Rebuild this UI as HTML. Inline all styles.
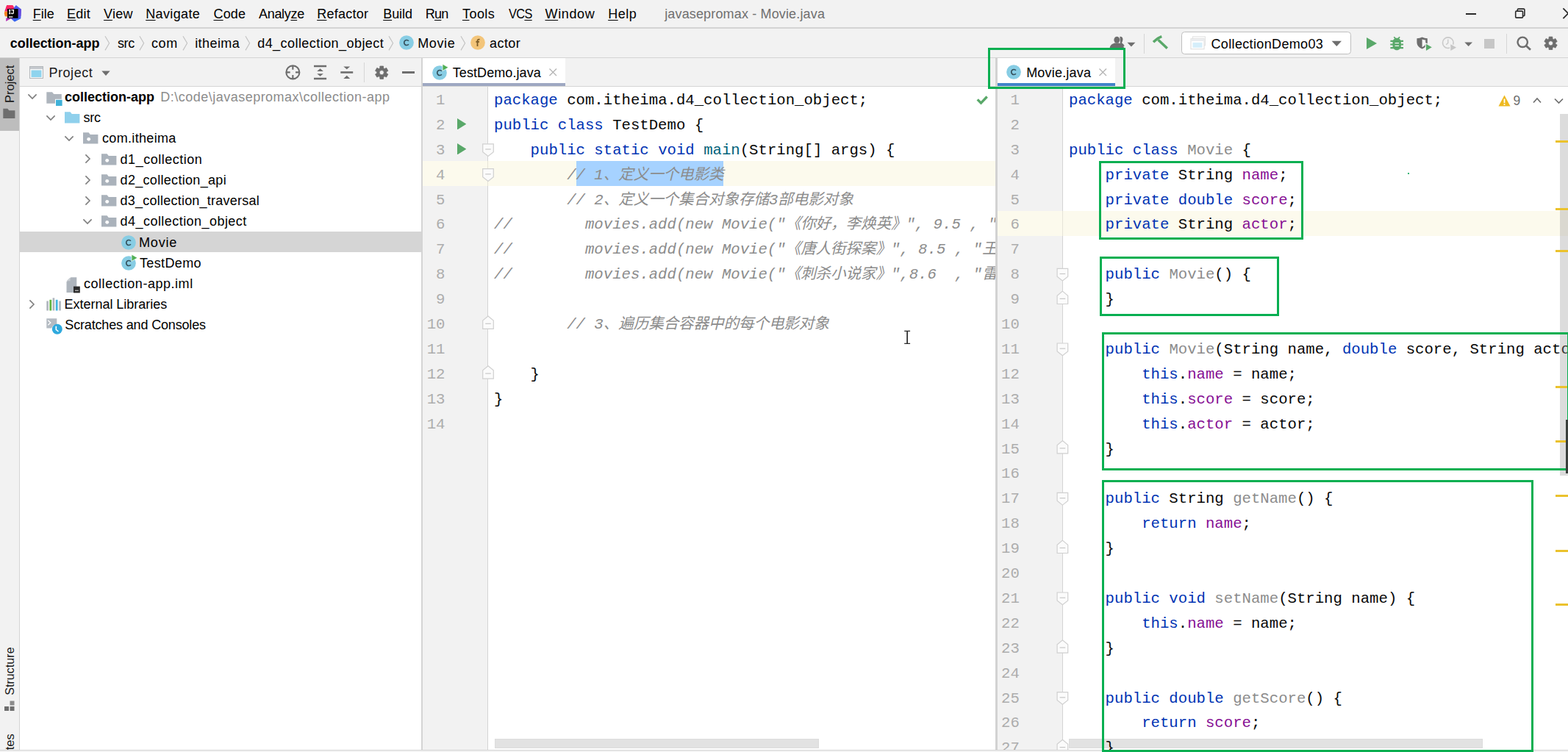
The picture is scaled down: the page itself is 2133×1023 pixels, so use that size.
<!DOCTYPE html><html><head><meta charset="utf-8"><title>IDE</title><style>
html,body{margin:0;padding:0}
body{width:2133px;height:1023px;overflow:hidden;background:#f2f2f2;position:relative;font-family:"Liberation Sans", sans-serif;}
#r{position:absolute;left:0;top:0;width:2133px;height:1023px;overflow:hidden}
#r div,#r svg{position:absolute}
.t{white-space:pre;font-family:"Liberation Sans", sans-serif}
.m{font-family:"Liberation Mono", monospace}
.ln{white-space:pre;font-family:"Liberation Mono", "Noto Sans CJK SC", monospace;font-size:20.67px;line-height:33.9px;height:33.9px;color:#080808}
.z{letter-spacing:-0.19px}
.k{color:#0033b3}.f{color:#871094}.g{color:#8c8c8c}.c{color:#8c8c8c;font-style:italic}.fn{color:#00627a}
.n{font-family:"Liberation Mono", monospace;font-size:20.67px;line-height:33.9px;color:#adadad;text-align:right;width:40px}
u{text-decoration:underline;text-underline-offset:1.500px;text-decoration-thickness:1.200px}
</style></head><body><div id="r"><div style="left:0px;top:0px;width:2133px;height:38px;background:#f2f2f2;"></div><div style="left:0px;top:37.3px;width:2133px;height:1.4px;background:#d4d4d4;"></div><svg style="left:4px;top:4px" width="28" height="28" viewBox="4 4 28 28">
<path d="M9.300 6.900L17.300 7.300L19.600 11L17 16L6.200 15.400Z" fill="#f4266e"/><path d="M9.300 6.900L17.300 7.300L19.600 11L8 11Z" fill="#fb2860"/>
<path d="M6.300 15.600L10.500 15.800L10.500 22.800L6.800 22.200L5.800 18.500Z" fill="#fc801d"/>
<path d="M21.800 6.900L28.800 12.600L28.300 25L19.900 29.600L15.400 25.600L19 10.500Z" fill="#4a5cee"/><path d="M24.600 12L28.800 12.600L28.400 22L24.600 22Z" fill="#6a4ae0"/><path d="M15.400 25.600L24.600 24.800L28.300 25L19.900 29.600Z" fill="#3668f3"/>
<path d="M8.400 24.300L8.100 28.900L15.800 24.800Z" fill="#b52fb5"/>
<path d="M10 24.600L14 24.600L18 26.600L20 27.500L17 24.600Z" fill="#7d3fd6"/>
<rect x="10" y="12.100" width="14.600" height="12.700" fill="#000"/>
<path d="M12 13.600h2.400M13.200 13.600v5M12 18.600h2.400M15.400 13.600h3.700M18.300 13.600v3.600a1.400 1.400 0 0 1-2.800 .2" stroke="#fff" stroke-width="1.300" fill="none"/>
<path d="M11.900 23h5.500" stroke="#fff" stroke-width="1.300"/></svg><div class="t" style="letter-spacing:-0.004px;left:44.7px;top:10.46px;font-size:18px;line-height:18px;color:#000;"><u>F</u>ile</div><div class="t" style="letter-spacing:0.305px;left:90.9px;top:10.46px;font-size:18px;line-height:18px;color:#000;"><u>E</u>dit</div><div class="t" style="letter-spacing:0.228px;left:141px;top:10.46px;font-size:18px;line-height:18px;color:#000;"><u>V</u>iew</div><div class="t" style="letter-spacing:0.367px;left:198.2px;top:10.46px;font-size:18px;line-height:18px;color:#000;"><u>N</u>avigate</div><div class="t" style="letter-spacing:0.129px;left:290.5px;top:10.46px;font-size:18px;line-height:18px;color:#000;"><u>C</u>ode</div><div class="t" style="letter-spacing:-0.315px;left:352px;top:10.46px;font-size:18px;line-height:18px;color:#000;">Analy<u>z</u>e</div><div class="t" style="letter-spacing:0.236px;left:431.2px;top:10.46px;font-size:18px;line-height:18px;color:#000;"><u>R</u>efactor</div><div class="t" style="letter-spacing:-0.055px;left:521.2px;top:10.46px;font-size:18px;line-height:18px;color:#000;"><u>B</u>uild</div><div class="t" style="letter-spacing:-0.693px;left:578.7px;top:10.46px;font-size:18px;line-height:18px;color:#000;">R<u>u</u>n</div><div class="t" style="letter-spacing:0.438px;left:629px;top:10.46px;font-size:18px;line-height:18px;color:#000;"><u>T</u>ools</div><div class="t" style="letter-spacing:-0.700px;transform-origin:0 50%;transform:scaleX(0.9070);left:692px;top:10.46px;font-size:18px;line-height:18px;color:#000;">VC<u>S</u></div><div class="t" style="letter-spacing:0.631px;left:741.5px;top:10.46px;font-size:18px;line-height:18px;color:#000;"><u>W</u>indow</div><div class="t" style="letter-spacing:0.505px;left:827.2px;top:10.46px;font-size:18px;line-height:18px;color:#000;"><u>H</u>elp</div><div class="t" style="letter-spacing:0.151px;left:904.2px;top:10.46px;font-size:18px;line-height:18px;color:#707070;">javasepromax - Movie.java</div><div style="left:1994px;top:18px;width:14.2px;height:1.8px;background:#2a2a2a;"></div><svg style="left:2058px;top:9px" width="20" height="19" viewBox="2058 9 20 19"><rect x="2064.300" y="12.100" width="9.600" height="9.500" rx="1.200" fill="none" stroke="#2a2a2a" stroke-width="1.600"/><rect x="2061.700" y="15.100" width="9.800" height="9" rx="1.200" fill="#f2f2f2" stroke="#2a2a2a" stroke-width="1.600"/></svg><svg style="left:2122px;top:8px" width="11" height="21" viewBox="2122 8 11 21"><path d="M2126.400 11.300L2140 25M2126.400 25.100L2140 11.400" fill="none" stroke="#2a2a2a" stroke-width="1.700"/></svg><div style="left:0px;top:39px;width:2133px;height:39px;background:#f2f2f2;"></div><div style="left:0px;top:78px;width:2133px;height:1px;background:#d4d4d4;"></div><div class="t" style="letter-spacing:-0.016px;left:13.7px;top:50.06px;font-size:18px;line-height:18px;color:#000;font-weight:700;">collection-app</div><div class="t" style="letter-spacing:-0.400px;left:160px;top:50.06px;font-size:18px;line-height:18px;color:#000;">src</div><div class="t" style="letter-spacing:0.594px;left:206px;top:50.06px;font-size:18px;line-height:18px;color:#000;">com</div><div class="t" style="letter-spacing:0.426px;left:265.2px;top:50.06px;font-size:18px;line-height:18px;color:#000;">itheima</div><div class="t" style="letter-spacing:0.445px;left:350.2px;top:50.06px;font-size:18px;line-height:18px;color:#000;">d4_collection_object</div><div class="t" style="letter-spacing:0.619px;left:568.2px;top:50.06px;font-size:18px;line-height:18px;color:#000;">Movie</div><div class="t" style="letter-spacing:0.438px;left:666px;top:50.06px;font-size:18px;line-height:18px;color:#000;">actor</div><svg style="left:140.7px;top:47px;" width="10" height="24" viewBox="0 0 10 24"><path d="M2 2.200L7.600 11.800L2 21.400" fill="none" stroke="#c2c2c2" stroke-width="1.150"/></svg><svg style="left:188.2px;top:47px;" width="10" height="24" viewBox="0 0 10 24"><path d="M2 2.200L7.600 11.800L2 21.400" fill="none" stroke="#c2c2c2" stroke-width="1.150"/></svg><svg style="left:246.7px;top:47px;" width="10" height="24" viewBox="0 0 10 24"><path d="M2 2.200L7.600 11.800L2 21.400" fill="none" stroke="#c2c2c2" stroke-width="1.150"/></svg><svg style="left:331.7px;top:47px;" width="10" height="24" viewBox="0 0 10 24"><path d="M2 2.200L7.600 11.800L2 21.400" fill="none" stroke="#c2c2c2" stroke-width="1.150"/></svg><svg style="left:527.2px;top:47px;" width="10" height="24" viewBox="0 0 10 24"><path d="M2 2.200L7.600 11.800L2 21.400" fill="none" stroke="#c2c2c2" stroke-width="1.150"/></svg><svg style="left:624.7px;top:47px;" width="10" height="24" viewBox="0 0 10 24"><path d="M2 2.200L7.600 11.800L2 21.400" fill="none" stroke="#c2c2c2" stroke-width="1.150"/></svg><svg style="left:540.7px;top:46.3px;" width="24" height="24" viewBox="0 0 24 24"><circle cx="12" cy="12" r="9.85" fill="#87cde4"/><path d="M14.9 14.3a3.500 3.500 0 1 1 0-4.600" fill="none" stroke="#35505c" stroke-width="1.700"/></svg><svg style="left:638px;top:46.3px;" width="24" height="24" viewBox="0 0 24 24"><circle cx="12" cy="12" r="9.85" fill="#f3c57a"/><path d="M14.6 7.6h-1.2a1.9 1.9 0 0 0-1.9 1.9V17M9.4 10.9h4.6" fill="none" stroke="#7a5a26" stroke-width="1.8"/></svg><svg style="left:1506px;top:46px" width="42" height="24" viewBox="1506 46 42 24"><path d="M1523.400 49.800c2.600-.500 4.300 1.600 4 4.300c-.2 2-1 3.200-1.400 4.200c1.200 1.600 3.200 1.800 3.600 4.500l-5.500 .2Z" fill="#6e6e6e"/><ellipse cx="1519.300" cy="54.300" rx="3.900" ry="4.500" fill="#6e6e6e"/><path d="M1509.600 66c.2-5 3.600-6.300 6.800-7.400h5.800c3.200 1.100 6.600 2.400 6.800 7.400Z" fill="#6e6e6e"/><path d="M1533.400 57.800h11l-5.500 5.700Z" fill="#6e6e6e"/></svg><div style="left:1556px;top:45.5px;width:1px;height:27px;background:#d6d6d6;"></div><svg style="left:1565px;top:46px" width="27" height="24" viewBox="1565 46 27 24"><path d="M1569 57.300C1572.500 54 1576 51 1580.300 49.600" fill="none" stroke="#59a869" stroke-width="3.600"/><path d="M1575.600 54.300L1587.800 65.700" fill="none" stroke="#59a869" stroke-width="3.400"/></svg><div style="left:1607px;top:43.400px;width:228.600px;height:28.200px;background:#fff;border:1.300px solid #bfbfbf;border-radius:4.500px"></div><svg style="left:1619px;top:49px;" width="22" height="19" viewBox="0 0 22 19"><rect x="3.500" y="0.8" width="17" height="12" fill="#fafafa" stroke="#e3e3e3" stroke-width="1"/><rect x="1" y="3.800" width="18" height="14" fill="#fff" stroke="#dcdcdc" stroke-width="1"/><rect x="1.500" y="4.300" width="17" height="2.600" fill="#e9ebee"/><rect x="3.500" y="8.800" width="13" height="7" fill="#d5eefa"/></svg><div class="t" style="letter-spacing:0.350px;left:1647.5px;top:50.76px;font-size:18px;line-height:18px;color:#000;">CollectionDemo03</div><svg style="left:1811px;top:55px;" width="15" height="9" viewBox="0 0 15 9"><path d="M0.600 0.800H14L7.300 8Z" fill="#6e6e6e"/></svg><svg style="left:1858.5px;top:51px;" width="14" height="16" viewBox="0 0 14 16"><path d="M0 0L14 8.0L0 16Z" fill="#59a869"/></svg><svg style="left:1888px;top:47px" width="24" height="24" viewBox="1888 47 24 24"><path d="M1896.300 50.300l2.300 2.600M1904.100 50.300l-2.300 2.600" stroke="#59a869" stroke-width="1.700" fill="none"/><path d="M1891.400 55.900h4.500M1904.500 55.900h4.500M1891.300 60.500h4M1905 60.500h4M1891.400 65.100h4.500M1904.500 65.100h4.500" stroke="#59a869" stroke-width="2.100" fill="none"/><path d="M1900.200 51.700c3.500 0 5.700 2.600 5.700 6v4.500c0 3.400-2.400 6-5.700 6s-5.700-2.600-5.700-6v-4.500c0-3.400 2.200-6 5.700-6Z" fill="#59a869"/><path d="M1897.500 58.600h5.500M1897.500 62.400h5.500" stroke="#f2f2f2" stroke-width="1.300"/></svg><svg style="left:1925px;top:47px" width="26" height="25" viewBox="1925 47 26 25"><path d="M1927.400 52.300c2.600-.300 5-1 7.200-1.900c2.200 .9 4.600 1.600 7.200 1.900v5.200c0 4.300-3 7.300-7.200 9c-4.200-1.700-7.200-4.700-7.200-9Z" fill="#6e6e6e"/><path d="M1934.600 53.400c1.600 .5 3 1 4.600 1.200v4c0 2.400-1.500 4.300-4.600 5.700Z" fill="#f7f7f7"/><path d="M1939.300 58.700L1948.900 64.300L1939.300 69.900Z" fill="#59a869" stroke="#f2f2f2" stroke-width="1.200"/></svg><svg style="left:1959px;top:47px" width="26" height="25" viewBox="1959 47 26 25"><circle cx="1969.800" cy="58.200" r="7.300" fill="none" stroke="#c9c9c9" stroke-width="1.600"/><path d="M1969.800 53.500v5l-2.600 2.200" fill="none" stroke="#c9c9c9" stroke-width="1.400"/><path d="M1972.700 59.200L1982.500 64.600L1972.700 70Z" fill="#c6c6c6" stroke="#f2f2f2" stroke-width="1.200"/></svg><svg style="left:1991px;top:56px" width="14" height="9" viewBox="1991 56 14 9"><path d="M1992.300 57.600h10.700l-5.350 5.500Z" fill="#6e6e6e"/></svg><div style="left:2019px;top:52.5px;width:14px;height:13.5px;background:#c6c6c6;"></div><div style="left:2049px;top:45.5px;width:1px;height:27px;background:#d6d6d6;"></div><svg style="left:2061px;top:47px" width="24" height="24" viewBox="2061 47 24 24"><circle cx="2071.200" cy="57.300" r="6.700" fill="none" stroke="#6e6e6e" stroke-width="2.400"/><path d="M2075.800 62L2082 67.800" stroke="#6e6e6e" stroke-width="2.800"/></svg><svg style="left:2098px;top:47px" width="22" height="22" viewBox="2098 47 22 22"><path d="M2111.93 52.77L2111.83 50.11L2107.17 50.11L2107.07 52.77L2105.50 53.68L2103.14 52.44L2100.81 56.47L2103.06 57.90L2103.06 59.70L2100.81 61.13L2103.14 65.16L2105.50 63.92L2107.07 64.83L2107.17 67.49L2111.83 67.49L2111.93 64.83L2113.50 63.92L2115.86 65.16L2118.19 61.13L2115.94 59.70L2115.94 57.90L2118.19 56.47L2115.86 52.44L2113.50 53.68ZM2106.40 58.80a3.1 3.1 0 1 0 6.2 0a3.1 3.1 0 1 0 -6.2 0Z" fill="#6e6e6e" fill-rule="evenodd" stroke="#6e6e6e" stroke-width="0.8" stroke-linejoin="round"/></svg><div style="left:0px;top:79px;width:26px;height:941px;background:#f2f2f2;"></div><div style="left:0px;top:79px;width:26px;height:99px;background:#bdbdbd;"></div><div style="left:26px;top:79px;width:1px;height:941px;background:#d4d4d4;"></div><div class="t" style="left:0;top:178px;width:99px;height:26px;transform-origin:0 0;transform:rotate(-90deg);font-size:16.500px;line-height:26px;color:#1a1a1a"><span style="position:absolute;left:38px;top:0">Project</span></div><svg style="left:4px;top:146px;" width="18" height="16" viewBox="0 0 18 16"><path d="M0.300 1.700h6l2 2.500h8.100v10.700H0.300Z" fill="#6e6e6e"/></svg><div class="t" style="left:0;top:1023px;width:200px;height:26px;transform-origin:0 0;transform:rotate(-90deg);font-size:16.500px;line-height:26px;color:#1a1a1a"><span style="position:absolute;left:77.300px;top:0;font-size:16.100px">Structure</span><span style="position:absolute;left:-43.200px;top:0">Favorites</span></div><svg style="left:5px;top:953.3px;" width="16" height="16" viewBox="0 0 16 16"><rect x="8.500" y="0.500" width="6" height="6" fill="#8a8a8a"/><rect x="1" y="8" width="6" height="6" fill="#6e6e6e"/><rect x="8.500" y="8" width="6" height="6" fill="#6e6e6e"/></svg><div style="left:27px;top:79px;width:546px;height:38px;background:#f2f2f2;"></div><div style="left:27px;top:117px;width:546px;height:1px;background:#d4d4d4;"></div><div style="left:27px;top:118px;width:546px;height:902px;background:#fff;"></div><div style="left:573px;top:79px;width:1.5px;height:941px;background:#d4d4d4;"></div><svg style="left:40.3px;top:90px;" width="19" height="17" viewBox="0 0 19 17"><rect x="0.500" y="0.500" width="18" height="16" fill="#f7f7f7" stroke="#b4b8bc" stroke-width="1"/><rect x="1" y="1" width="17" height="3" fill="#c5c9ce"/><rect x="2.500" y="5.500" width="14" height="9.500" fill="#8fd4ee"/></svg><div class="t" style="letter-spacing:0.534px;left:66.5px;top:90.16px;font-size:18px;line-height:18px;color:#1a1a1a;">Project</div><svg style="left:138px;top:96px;" width="12" height="8" viewBox="0 0 12 8"><path d="M0.300 0.500H11.700L6 7Z" fill="#6e6e6e"/></svg><svg style="left:386px;top:86px" width="25" height="25" viewBox="386 86 25 25"><circle cx="398.35" cy="98.4" r="9" fill="none" stroke="#6e6e6e" stroke-width="2.1"/><path d="M398.35 89v5.700M398.35 102.100v5.700M389 98.4h5.700M402 98.4h5.700" stroke="#6e6e6e" stroke-width="2.1"/></svg><svg style="left:425px;top:87px" width="22" height="23" viewBox="425 87 22 23"><path d="M427 90.050h17.100M427 106.950h17.100" stroke="#6e6e6e" stroke-width="2.600"/><path d="M431.200 96.900L435.550 93.300L439.900 96.900ZM431.200 100.200L435.550 103.700L439.900 100.200Z" fill="#6e6e6e"/></svg><svg style="left:461px;top:87px" width="22" height="23" viewBox="461 87 22 23"><path d="M463.300 98.450h16.900" stroke="#6e6e6e" stroke-width="2.600"/><path d="M467.300 90.400L471.750 94.200L476.200 90.400ZM467.300 106.900L471.750 102.800L476.200 106.900Z" fill="#6e6e6e"/></svg><div style="left:494.5px;top:85px;width:1px;height:27px;background:#d6d6d6;"></div><svg style="left:508px;top:87px" width="22" height="22" viewBox="508 87 22 22"><path d="M521.63 92.67L521.53 90.01L516.87 90.01L516.77 92.67L515.20 93.58L512.84 92.34L510.51 96.37L512.76 97.80L512.76 99.60L510.51 101.03L512.84 105.06L515.20 103.82L516.77 104.73L516.87 107.39L521.53 107.39L521.63 104.73L523.20 103.82L525.56 105.06L527.89 101.03L525.64 99.60L525.64 97.80L527.89 96.37L525.56 92.34L523.20 93.58ZM516.10 98.70a3.1 3.1 0 1 0 6.2 0a3.1 3.1 0 1 0 -6.2 0Z" fill="#6e6e6e" fill-rule="evenodd" stroke="#6e6e6e" stroke-width="0.8" stroke-linejoin="round"/></svg><div style="left:547px;top:97.1px;width:17px;height:2.6px;background:#6e6e6e;"></div><div style="left:27px;top:315.3px;width:546px;height:28.2px;background:#d5d5d5;"></div><svg style="left:35.6px;top:123.4px;" width="16" height="16" viewBox="0 0 16 16"><path d="M2.4000000000000004 5.4L8 11.0L13.6 5.4" fill="none" stroke="#7f7f7f" stroke-width="1.6"/></svg><svg style="left:62.5px;top:124.5px;" width="22" height="19" viewBox="0 0 22 19"><path d="M0.300 0.300h7.700l2.200 2.700H20.800V15.800H0.300Z" fill="#aeb5bd"/><rect x="12" y="9.800" width="10" height="9.200" fill="#fff"/><rect x="13" y="10.800" width="8.600" height="8.200" fill="#3fb1d8"/></svg><div class="t" style="letter-spacing:-0.001px;left:88px;top:123.06px;font-size:18px;line-height:18px;color:#000;font-weight:700;">collection-app</div><div class="t" style="letter-spacing:0.491px;left:218.2px;top:123.06px;font-size:18px;line-height:18px;color:#8c8c8c;">D:\code\javasepromax\collection-app</div><svg style="left:60.5px;top:151.61px;" width="16" height="16" viewBox="0 0 16 16"><path d="M2.4000000000000004 5.4L8 11.0L13.6 5.4" fill="none" stroke="#7f7f7f" stroke-width="1.6"/></svg><svg style="left:87.5px;top:152px;" width="21" height="16" viewBox="0 0 21 16"><path d="M0 0.3h7.6l2.2 2.7H20.4V15.6H0Z" fill="#8fd0ec"/></svg><div class="t" style="letter-spacing:-0.240px;left:113.6px;top:151.27px;font-size:18px;line-height:18px;color:#000;">src</div><svg style="left:86px;top:179.82000000000002px;" width="16" height="16" viewBox="0 0 16 16"><path d="M2.4000000000000004 5.4L8 11.0L13.6 5.4" fill="none" stroke="#7f7f7f" stroke-width="1.6"/></svg><svg style="left:113.3px;top:180.4px;" width="21" height="16" viewBox="0 0 21 16"><path d="M0 0.3h7.6l2.2 2.7H20.4V15.6H0Z" fill="#aab2bb"/><circle cx="7.7" cy="9.3" r="2.4" fill="#fff"/></svg><div class="t" style="letter-spacing:0.330px;left:139px;top:179.48px;font-size:18px;line-height:18px;color:#000;">com.itheima</div><svg style="left:111.3px;top:208.43px;" width="16" height="16" viewBox="0 0 16 16"><path d="M5.4 2.4000000000000004L11.0 8L5.4 13.6" fill="none" stroke="#7f7f7f" stroke-width="1.6"/></svg><svg style="left:138.4px;top:208.61px;" width="21" height="16" viewBox="0 0 21 16"><path d="M0 0.3h7.6l2.2 2.7H20.4V15.6H0Z" fill="#aab2bb"/><circle cx="7.7" cy="9.3" r="2.4" fill="#fff"/></svg><div class="t" style="letter-spacing:0.506px;left:163.6px;top:207.69px;font-size:18px;line-height:18px;color:#000;">d1_collection</div><svg style="left:111.3px;top:236.64000000000001px;" width="16" height="16" viewBox="0 0 16 16"><path d="M5.4 2.4000000000000004L11.0 8L5.4 13.6" fill="none" stroke="#7f7f7f" stroke-width="1.6"/></svg><svg style="left:138.4px;top:236.82px;" width="21" height="16" viewBox="0 0 21 16"><path d="M0 0.3h7.6l2.2 2.7H20.4V15.6H0Z" fill="#aab2bb"/><circle cx="7.7" cy="9.3" r="2.4" fill="#fff"/></svg><div class="t" style="letter-spacing:0.309px;left:163.6px;top:235.90px;font-size:18px;line-height:18px;color:#000;">d2_collection_api</div><svg style="left:111.3px;top:264.85px;" width="16" height="16" viewBox="0 0 16 16"><path d="M5.4 2.4000000000000004L11.0 8L5.4 13.6" fill="none" stroke="#7f7f7f" stroke-width="1.6"/></svg><svg style="left:138.4px;top:265.03px;" width="21" height="16" viewBox="0 0 21 16"><path d="M0 0.3h7.6l2.2 2.7H20.4V15.6H0Z" fill="#aab2bb"/><circle cx="7.7" cy="9.3" r="2.4" fill="#fff"/></svg><div class="t" style="letter-spacing:0.226px;left:163.6px;top:264.11px;font-size:18px;line-height:18px;color:#000;">d3_collection_traversal</div><svg style="left:111.4px;top:292.65999999999997px;" width="16" height="16" viewBox="0 0 16 16"><path d="M2.4000000000000004 5.4L8 11.0L13.6 5.4" fill="none" stroke="#7f7f7f" stroke-width="1.6"/></svg><svg style="left:138.4px;top:293.24px;" width="21" height="16" viewBox="0 0 21 16"><path d="M0 0.3h7.6l2.2 2.7H20.4V15.6H0Z" fill="#aab2bb"/><circle cx="7.7" cy="9.3" r="2.4" fill="#fff"/></svg><div class="t" style="letter-spacing:0.450px;left:163.6px;top:292.32px;font-size:18px;line-height:18px;color:#000;">d4_collection_object</div><svg style="left:162.5px;top:318.2px;" width="24" height="24" viewBox="0 0 24 24"><circle cx="12" cy="12" r="9.85" fill="#87cde4"/><path d="M14.9 14.3a3.500 3.500 0 1 1 0-4.600" fill="none" stroke="#35505c" stroke-width="1.700"/></svg><div class="t" style="letter-spacing:0.700px;transform-origin:0 50%;transform:scaleX(1.0085);left:189.2px;top:320.53px;font-size:18px;line-height:18px;color:#000;">Movie</div><svg style="left:162.5px;top:346.4px;" width="24" height="24" viewBox="0 0 24 24"><circle cx="12" cy="12" r="9.85" fill="#87cde4"/><path d="M14.9 14.3a3.500 3.500 0 1 1 0-4.600" fill="none" stroke="#35505c" stroke-width="1.700"/><path d="M16 0.2L24 4.800L16 9.400Z" fill="#4fae54" stroke="#fff" stroke-width="0.7"/></svg><div class="t" style="letter-spacing:0.369px;left:190px;top:348.74px;font-size:18px;line-height:18px;color:#000;">TestDemo</div><svg style="left:90px;top:376.5px;" width="20" height="22" viewBox="0 0 20 22"><path d="M6.500 0.300H14.300V13H18V21H0.500V6.300Z" fill="#aeb5bd"/><path d="M0.500 5.300L5.500 0.300V5.300Z" fill="#c9ced3"/><rect x="10" y="12.600" width="8.800" height="8.800" fill="#2b2b2b"/><rect x="12" y="17.600" width="4.800" height="1.300" fill="#bbb"/></svg><div class="t" style="letter-spacing:0.534px;left:114px;top:376.95px;font-size:18px;line-height:18px;color:#000;">collection-app.iml</div><svg style="left:34.6px;top:405.90000000000003px;" width="16" height="16" viewBox="0 0 16 16"><path d="M5.4 2.4000000000000004L11.0 8L5.4 13.6" fill="none" stroke="#7f7f7f" stroke-width="1.6"/></svg><svg style="left:62.5px;top:404.5px;" width="21" height="18" viewBox="0 0 21 18"><rect x="0.300" y="4.500" width="2.600" height="13" fill="#aeb5bd"/><rect x="4.400" y="2.800" width="2.800" height="14.700" fill="#62b543"/><rect x="8.600" y="0.300" width="2.600" height="17.200" fill="#aeb5bd"/><rect x="12.800" y="2.800" width="2.800" height="14.700" fill="#40b6e0"/><rect x="17.200" y="4.500" width="2.600" height="13" fill="#aeb5bd"/></svg><div class="t" style="letter-spacing:-0.021px;left:87.5px;top:405.16px;font-size:18px;line-height:18px;color:#000;">External Libraries</div><svg style="left:62.5px;top:433px;" width="22" height="22" viewBox="0 0 22 22"><path d="M0.300 0.300H14.300V9.500H9.500L7 13.500H0.300Z" fill="#b4bbc2"/><path d="M2.300 2.800L5.800 6L2.300 9.200" fill="none" stroke="#fff" stroke-width="1.300"/><circle cx="14.800" cy="14.800" r="7" fill="#2fa9dd"/><path d="M13.300 10.800v4.600l3.200 2.600" fill="none" stroke="#fff" stroke-width="1.600"/></svg><div class="t" style="letter-spacing:-0.159px;left:88.3px;top:433.37px;font-size:18px;line-height:18px;color:#000;">Scratches and Consoles</div><div style="left:575px;top:79px;width:779.5px;height:38px;background:#f2f2f2;"></div><div style="left:575px;top:117px;width:779.5px;height:1px;background:#d4d4d4;"></div><div style="left:575px;top:118px;width:779.5px;height:902px;background:#fff;"></div><div style="left:575px;top:118px;width:88px;height:902px;background:#f2f2f2;"></div><div style="left:663px;top:118px;width:1px;height:902px;background:#d4d4d4;"></div><div style="left:575px;top:219.29999999999998px;width:779.5px;height:33.9px;background:#fcfaed;"></div><div style="left:663px;top:219.29999999999998px;width:1px;height:33.9px;background:#e6e4d8;"></div><div style="left:575px;top:79px;width:194px;height:34px;background:#fff;"></div><div style="left:575px;top:113px;width:194px;height:4.3px;background:#9ea8c2;"></div><svg style="left:586px;top:86.5px;" width="24" height="24" viewBox="0 0 24 24"><circle cx="12" cy="12" r="9.85" fill="#87cde4"/><path d="M14.9 14.3a3.500 3.500 0 1 1 0-4.600" fill="none" stroke="#35505c" stroke-width="1.700"/><path d="M16 0.2L24 4.800L16 9.400Z" fill="#4fae54" stroke="#fff" stroke-width="0.7"/></svg><div class="t" style="letter-spacing:0.075px;left:615.8px;top:90.16px;font-size:18px;line-height:18px;color:#000;">TestDemo.java</div><svg style="left:746.3px;top:92.2px;" width="13" height="13" viewBox="0 0 13 13"><path d="M1.500 1.500L11 11M11 1.500L1.500 11" stroke="#b4b4b4" stroke-width="1.300"/></svg><div style="left:673px;top:1004.8px;width:440.6px;height:13.2px;background:#e2e2e2;box-shadow:inset 0 0 0 1px #dcdcdc"></div><div style="left:783.5px;top:219.29999999999998px;width:200.5px;height:33.9px;background:#a6d2ff;"></div><div style="left:0;top:0;width:1354.5px;height:1020px;overflow:hidden"><div class="n" style="left:565.500px;top:119.90px">1</div><div class="n" style="left:565.500px;top:153.80px">2</div><div class="n" style="left:565.500px;top:187.70px">3</div><div class="n" style="left:565.500px;top:221.60px">4</div><div class="n" style="left:565.500px;top:255.50px">5</div><div class="n" style="left:565.500px;top:289.40px">6</div><div class="n" style="left:565.500px;top:323.30px">7</div><div class="n" style="left:565.500px;top:357.20px">8</div><div class="n" style="left:565.500px;top:391.10px">9</div><div class="n" style="left:565.500px;top:425.00px">10</div><div class="n" style="left:565.500px;top:458.90px">11</div><div class="n" style="left:565.500px;top:492.80px">12</div><div class="n" style="left:565.500px;top:526.70px">13</div><div class="n" style="left:565.500px;top:560.60px">14</div><div class="ln" style="left:672px;top:119.90px"><span class="k">package</span> com.itheima.d4_collection_object;</div><div class="ln" style="left:672px;top:153.80px"><span class="k">public class</span> TestDemo {</div><div class="ln" style="left:672px;top:187.70px">    <span class="k">public static void</span> <span class="fn">main</span>(String[] args) {</div><div class="ln" style="left:672px;top:221.60px"><span class="c">        // 1<span class="z">、定义一个电影类</span></span></div><div class="ln" style="left:672px;top:255.50px"><span class="c">        // 2<span class="z">、定义一个集合对象存储</span>3<span class="z">部电影对象</span></span></div><div class="ln" style="left:672px;top:289.40px"><span class="c">//        movies.add(new Movie("<span class="z">《你好，李焕英》</span>", 9.5 , "</span></div><div class="ln" style="left:672px;top:323.30px"><span class="c">//        movies.add(new Movie("<span class="z">《唐人街探案》</span>", 8.5 , "<span class="z">王</span></span></div><div class="ln" style="left:672px;top:357.20px"><span class="c">//        movies.add(new Movie("<span class="z">《刺杀小说家》</span>",8.6  , "<span class="z">雷</span></span></div><div class="ln" style="left:672px;top:425.00px"><span class="c">        // 3<span class="z">、遍历集合容器中的每个电影对象</span></span></div><div class="ln" style="left:672px;top:492.80px">    }</div><div class="ln" style="left:672px;top:526.70px">}</div></div><svg style="left:621.5px;top:160.8px;" width="12.5" height="15.5" viewBox="0 0 12.5 15.5"><path d="M0 0L12.5 7.75L0 15.5Z" fill="#59a869"/></svg><svg style="left:621.5px;top:194.7px;" width="12.5" height="15.5" viewBox="0 0 12.5 15.5"><path d="M0 0L12.5 7.75L0 15.5Z" fill="#59a869"/></svg><svg style="left:654px;top:189px" width="20" height="26" viewBox="654 189 20 26"><path d="M656.70 195.80H671.30V206.70L664.00 212.50L656.70 206.70Z" fill="#fbfbfb" stroke="#d0d0d0" stroke-width="1.2"/><path d="M660.20 203.00H667.80" stroke="#c8c8c8" stroke-width="1.2"/></svg><svg style="left:654px;top:223px" width="20" height="26" viewBox="654 223 20 26"><path d="M656.70 229.70H671.30V240.60L664.00 246.40L656.70 240.60Z" fill="#fbfbfb" stroke="#d0d0d0" stroke-width="1.2"/><path d="M660.20 236.90H667.80" stroke="#c8c8c8" stroke-width="1.2"/></svg><svg style="left:654px;top:426px" width="20" height="26" viewBox="654 426 20 26"><path d="M664.00 430.00L671.30 436.10V447.40H656.70V436.10Z" fill="#fbfbfb" stroke="#d0d0d0" stroke-width="1.2"/><path d="M660.20 440.30H667.80" stroke="#c8c8c8" stroke-width="1.2"/></svg><svg style="left:654px;top:494px" width="20" height="26" viewBox="654 494 20 26"><path d="M664.00 497.80L671.30 503.90V515.20H656.70V503.90Z" fill="#fbfbfb" stroke="#d0d0d0" stroke-width="1.2"/><path d="M660.20 508.10H667.80" stroke="#c8c8c8" stroke-width="1.2"/></svg><svg style="left:1326px;top:127px" width="20" height="18" viewBox="1326 127 20 18"><path d="M1329.700 135.300L1334.500 140.200L1342.700 131.500" fill="none" stroke="#59a869" stroke-width="3.300"/></svg><svg style="left:1228px;top:447px" width="13" height="24" viewBox="1228 447 13 24"><path d="M1230.200 450.300H1238.100M1230.200 467.300H1238.100" stroke="#2a2a2a" stroke-width="1.300"/><path d="M1234.150 450.300V467.300" stroke="#2a2a2a" stroke-width="1.700"/></svg><div style="left:1354.2px;top:79px;width:2.9px;height:941px;background:#d2d2d2;"></div><div style="left:1357px;top:79px;width:776px;height:38px;background:#f2f2f2;"></div><div style="left:1357px;top:117px;width:776px;height:1px;background:#d4d4d4;"></div><div style="left:1357px;top:118px;width:776px;height:902px;background:#fff;"></div><div style="left:1357px;top:118px;width:88px;height:902px;background:#f2f2f2;"></div><div style="left:1445px;top:118px;width:1px;height:902px;background:#d4d4d4;"></div><div style="left:1357px;top:287.1px;width:776px;height:33.9px;background:#fcfaed;"></div><div style="left:1445px;top:287.1px;width:1px;height:33.9px;background:#e6e4d8;"></div><div style="left:1357px;top:79px;width:160px;height:34px;background:#fff;"></div><div style="left:1357px;top:113px;width:160px;height:4.3px;background:#4083c9;"></div><svg style="left:1367.4px;top:86.4px;" width="24" height="24" viewBox="0 0 24 24"><circle cx="12" cy="12" r="9.85" fill="#87cde4"/><path d="M14.9 14.3a3.500 3.500 0 1 1 0-4.600" fill="none" stroke="#35505c" stroke-width="1.700"/></svg><div class="t" style="letter-spacing:0.185px;left:1396.2px;top:90.16px;font-size:18px;line-height:18px;color:#000;">Movie.java</div><svg style="left:1494.2px;top:92.3px;" width="13" height="13" viewBox="0 0 13 13"><path d="M1.500 1.500L11 11M11 1.500L1.500 11" stroke="#b4b4b4" stroke-width="1.300"/></svg><div style="left:1454.4px;top:1004.6px;width:562.6px;height:13.2px;background:#e2e2e2;box-shadow:inset 0 0 0 1px #dcdcdc"></div><div class="n" style="left:1346.800px;top:119.90px">1</div><div class="n" style="left:1346.800px;top:153.80px">2</div><div class="n" style="left:1346.800px;top:187.70px">3</div><div class="n" style="left:1346.800px;top:221.60px">4</div><div class="n" style="left:1346.800px;top:255.50px">5</div><div class="n" style="left:1346.800px;top:289.40px">6</div><div class="n" style="left:1346.800px;top:323.30px">7</div><div class="n" style="left:1346.800px;top:357.20px">8</div><div class="n" style="left:1346.800px;top:391.10px">9</div><div class="n" style="left:1346.800px;top:425.00px">10</div><div class="n" style="left:1346.800px;top:458.90px">11</div><div class="n" style="left:1346.800px;top:492.80px">12</div><div class="n" style="left:1346.800px;top:526.70px">13</div><div class="n" style="left:1346.800px;top:560.60px">14</div><div class="n" style="left:1346.800px;top:594.50px">15</div><div class="n" style="left:1346.800px;top:628.40px">16</div><div class="n" style="left:1346.800px;top:662.30px">17</div><div class="n" style="left:1346.800px;top:696.20px">18</div><div class="n" style="left:1346.800px;top:730.10px">19</div><div class="n" style="left:1346.800px;top:764.00px">20</div><div class="n" style="left:1346.800px;top:797.90px">21</div><div class="n" style="left:1346.800px;top:831.80px">22</div><div class="n" style="left:1346.800px;top:865.70px">23</div><div class="n" style="left:1346.800px;top:899.60px">24</div><div class="n" style="left:1346.800px;top:933.50px">25</div><div class="n" style="left:1346.800px;top:967.40px">26</div><div class="n" style="left:1346.800px;top:1001.30px">27</div><div class="ln" style="left:1454px;top:119.90px"><span class="k">package</span> com.itheima.d4_collection_object;</div><div class="ln" style="left:1454px;top:187.70px"><span class="k">public class</span> <span class="g">Movie</span> {</div><div class="ln" style="left:1454px;top:221.60px">    <span class="k">private</span> String <span class="f">name</span>;</div><div class="ln" style="left:1454px;top:255.50px">    <span class="k">private double</span> <span class="f">score</span>;</div><div class="ln" style="left:1454px;top:289.40px">    <span class="k">private</span> String <span class="f">actor</span>;</div><div class="ln" style="left:1454px;top:357.20px">    <span class="k">public</span> <span class="g">Movie</span>() {</div><div class="ln" style="left:1454px;top:391.10px">    }</div><div class="ln" style="left:1454px;top:458.90px">    <span class="k">public</span> <span class="g">Movie</span>(String name, <span class="k">double</span> score, String actor) {</div><div class="ln" style="left:1454px;top:492.80px">        <span class="k">this</span>.<span class="f">name</span> = name;</div><div class="ln" style="left:1454px;top:526.70px">        <span class="k">this</span>.<span class="f">score</span> = score;</div><div class="ln" style="left:1454px;top:560.60px">        <span class="k">this</span>.<span class="f">actor</span> = actor;</div><div class="ln" style="left:1454px;top:594.50px">    }</div><div class="ln" style="left:1454px;top:662.30px">    <span class="k">public</span> String <span class="g">getName</span>() {</div><div class="ln" style="left:1454px;top:696.20px">        <span class="k">return</span> <span class="f">name</span>;</div><div class="ln" style="left:1454px;top:730.10px">    }</div><div class="ln" style="left:1454px;top:797.90px">    <span class="k">public void</span> <span class="g">setName</span>(String name) {</div><div class="ln" style="left:1454px;top:831.80px">        <span class="k">this</span>.<span class="f">name</span> = name;</div><div class="ln" style="left:1454px;top:865.70px">    }</div><div class="ln" style="left:1454px;top:933.50px">    <span class="k">public double</span> <span class="g">getScore</span>() {</div><div class="ln" style="left:1454px;top:967.40px">        <span class="k">return</span> <span class="f">score</span>;</div><div class="ln" style="left:1454px;top:1001.30px">    }</div><svg style="left:1435px;top:358px" width="20" height="26" viewBox="1435 358 20 26"><path d="M1438.10 365.30H1452.70V376.20L1445.40 382.00L1438.10 376.20Z" fill="#fbfbfb" stroke="#d0d0d0" stroke-width="1.2"/><path d="M1441.60 372.50H1449.20" stroke="#c8c8c8" stroke-width="1.2"/></svg><svg style="left:1435px;top:460px" width="20" height="26" viewBox="1435 460 20 26"><path d="M1438.10 467.00H1452.70V477.90L1445.40 483.70L1438.10 477.90Z" fill="#fbfbfb" stroke="#d0d0d0" stroke-width="1.2"/><path d="M1441.60 474.20H1449.20" stroke="#c8c8c8" stroke-width="1.2"/></svg><svg style="left:1435px;top:664px" width="20" height="26" viewBox="1435 664 20 26"><path d="M1438.10 670.40H1452.70V681.30L1445.40 687.10L1438.10 681.30Z" fill="#fbfbfb" stroke="#d0d0d0" stroke-width="1.2"/><path d="M1441.60 677.60H1449.20" stroke="#c8c8c8" stroke-width="1.2"/></svg><svg style="left:1435px;top:799px" width="20" height="26" viewBox="1435 799 20 26"><path d="M1438.10 806.00H1452.70V816.90L1445.40 822.70L1438.10 816.90Z" fill="#fbfbfb" stroke="#d0d0d0" stroke-width="1.2"/><path d="M1441.60 813.20H1449.20" stroke="#c8c8c8" stroke-width="1.2"/></svg><svg style="left:1435px;top:935px" width="20" height="26" viewBox="1435 935 20 26"><path d="M1438.10 941.60H1452.70V952.50L1445.40 958.30L1438.10 952.50Z" fill="#fbfbfb" stroke="#d0d0d0" stroke-width="1.2"/><path d="M1441.60 948.80H1449.20" stroke="#c8c8c8" stroke-width="1.2"/></svg><svg style="left:1435px;top:392px" width="20" height="26" viewBox="1435 392 20 26"><path d="M1445.40 396.10L1452.70 402.20V413.50H1438.10V402.20Z" fill="#fbfbfb" stroke="#d0d0d0" stroke-width="1.2"/><path d="M1441.60 406.40H1449.20" stroke="#c8c8c8" stroke-width="1.2"/></svg><svg style="left:1435px;top:596px" width="20" height="26" viewBox="1435 596 20 26"><path d="M1445.40 599.50L1452.70 605.60V616.90H1438.10V605.60Z" fill="#fbfbfb" stroke="#d0d0d0" stroke-width="1.2"/><path d="M1441.60 609.80H1449.20" stroke="#c8c8c8" stroke-width="1.2"/></svg><svg style="left:1435px;top:731px" width="20" height="26" viewBox="1435 731 20 26"><path d="M1445.40 735.10L1452.70 741.20V752.50H1438.10V741.20Z" fill="#fbfbfb" stroke="#d0d0d0" stroke-width="1.2"/><path d="M1441.60 745.40H1449.20" stroke="#c8c8c8" stroke-width="1.2"/></svg><svg style="left:1435px;top:867px" width="20" height="26" viewBox="1435 867 20 26"><path d="M1445.40 870.70L1452.70 876.80V888.10H1438.10V876.80Z" fill="#fbfbfb" stroke="#d0d0d0" stroke-width="1.2"/><path d="M1441.60 881.00H1449.20" stroke="#c8c8c8" stroke-width="1.2"/></svg><svg style="left:1435px;top:1003px" width="20" height="26" viewBox="1435 1003 20 26"><path d="M1445.40 1006.30L1452.70 1012.40V1023.70H1438.10V1012.40Z" fill="#fbfbfb" stroke="#d0d0d0" stroke-width="1.2"/><path d="M1441.60 1016.60H1449.20" stroke="#c8c8c8" stroke-width="1.2"/></svg><svg style="left:2037.5px;top:128.5px;" width="17" height="16" viewBox="0 0 17 16"><path d="M8.500 0.500L16.500 15.500H0.500Z" fill="#eeb91f"/><path d="M8.500 5.500v5.500M8.500 12.300v1.800" stroke="#fff" stroke-width="1.800"/></svg><div class="t" style="left:2058.5px;top:129.49px;font-size:17.5px;line-height:17.5px;color:#6e6e6e;">9</div><svg style="left:2084.5px;top:131.5px;" width="12" height="9" viewBox="0 0 12 9"><path d="M1 7.500L6 2L11 7.500" fill="none" stroke="#6e6e6e" stroke-width="1.700"/></svg><svg style="left:2113.5px;top:132.5px;" width="13" height="9" viewBox="0 0 13 9"><path d="M1 1.500L6.500 7L12 1.500" fill="none" stroke="#6e6e6e" stroke-width="1.700"/></svg><div style="left:2122.2px;top:155px;width:10.8px;height:492px;background:rgba(150,150,150,0.33);"></div><div style="left:2116.3px;top:191.2px;width:17px;height:3px;background:#ebc22d;"></div><div style="left:2116.3px;top:283.0px;width:17px;height:3px;background:#ebc22d;"></div><div style="left:2116.3px;top:339.8px;width:17px;height:3px;background:#ebc22d;"></div><div style="left:2116.3px;top:524.7px;width:17px;height:3px;background:#ebc22d;"></div><div style="left:2116.3px;top:599.4px;width:17px;height:3px;background:#ebc22d;"></div><div style="left:2116.3px;top:673.3px;width:17px;height:3px;background:#ebc22d;"></div><div style="left:2116.3px;top:748.2px;width:17px;height:3px;background:#ebc22d;"></div><div style="left:2116.3px;top:821.3px;width:17px;height:3px;background:#ebc22d;"></div><div style="left:0px;top:1020px;width:2133px;height:3px;background:#f2f2f2;"></div><div style="left:0px;top:1019.5px;width:2133px;height:1px;background:#d4d4d4;"></div><div style="left:1344px;top:65px;width:181px;height:49.7px;border:3px solid #08af51"></div><div style="left:1494.6px;top:219.4px;width:272.9000000000001px;height:101.1px;border:3px solid #08af51"></div><div style="left:1495.7px;top:349px;width:238.70000000000005px;height:75.39999999999998px;border:3px solid #08af51"></div><div style="left:1498.5px;top:451.6px;width:630.0999999999999px;height:182.89999999999998px;border:3px solid #08af51"></div><div style="left:1498.5px;top:652.6px;width:581.0px;height:364.6px;border:3px solid #08af51"></div><div style="left:2130.3px;top:571px;width:2.7px;height:73px;background:#3a3f3c;"></div><div style="left:1915px;top:234.5px;width:2px;height:2px;background:#2bb673;"></div></div></body></html>
